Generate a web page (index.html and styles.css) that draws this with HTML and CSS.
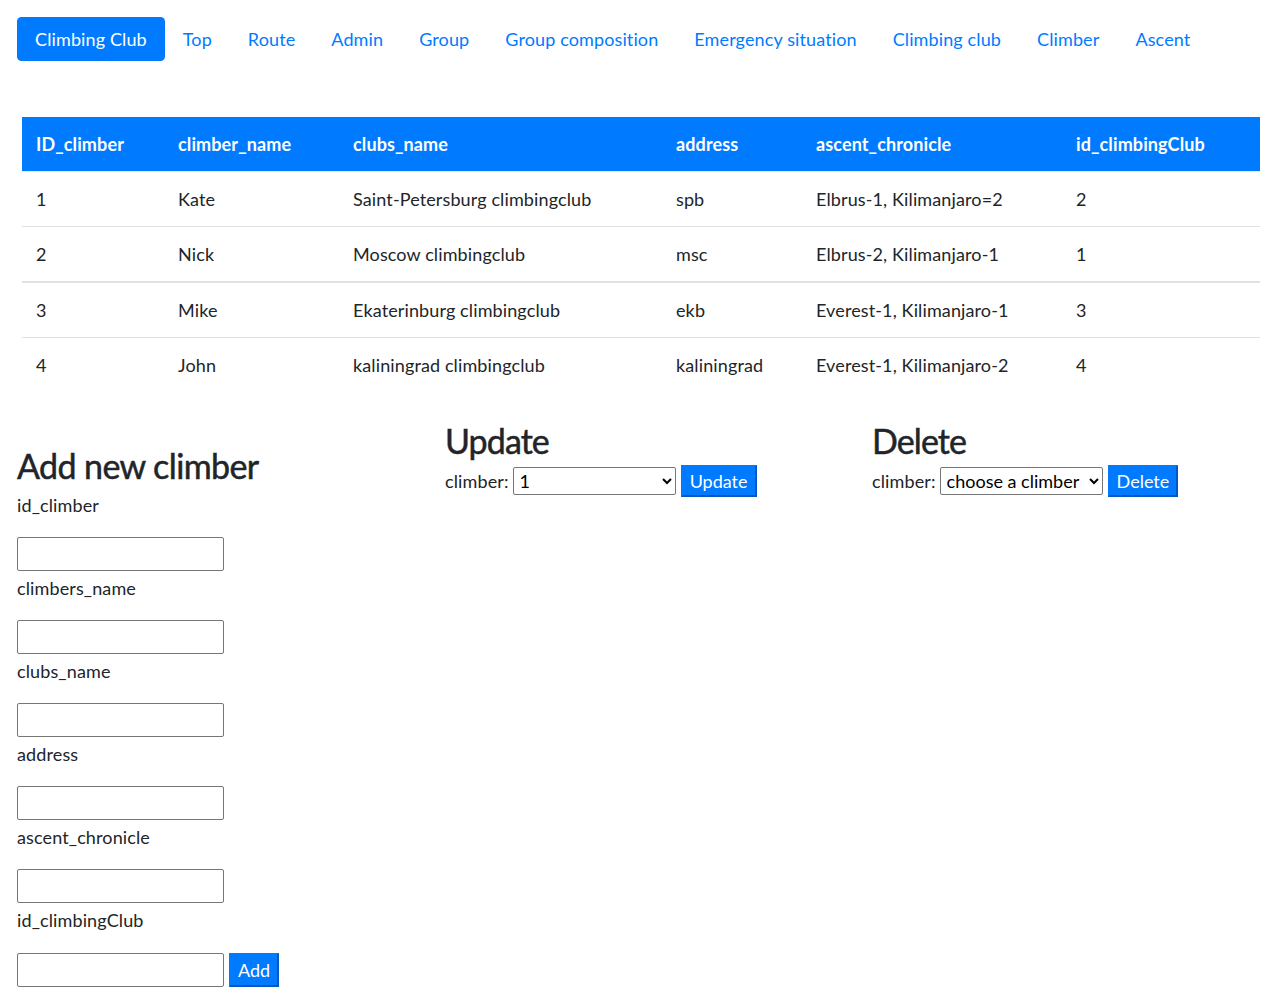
FILE: index.html
```html
<!DOCTYPE html>
<html lang="en">
<head>
<meta charset="utf-8">
<title>Climber</title>
<link rel="stylesheet" href="styles.css">
</head>
<body>
<div class="page">
  <nav class="nav">
    <a class="nav-link active" href="#">Climbing Club</a>
    <a class="nav-link" href="#">Top</a>
    <a class="nav-link" href="#">Route</a>
    <a class="nav-link" href="#">Admin</a>
    <a class="nav-link" href="#">Group</a>
    <a class="nav-link" href="#">Group composition</a>
    <a class="nav-link" href="#">Emergency situation</a>
    <a class="nav-link" href="#">Climbing club</a>
    <a class="nav-link" href="#">Climber</a>
    <a class="nav-link" href="#">Ascent</a>
  </nav>

  <table class="table">
    <colgroup>
      <col class="c1"><col class="c2"><col class="c3"><col class="c4"><col class="c5"><col class="c6">
    </colgroup>
    <thead>
      <tr><th>ID_climber</th><th>climber_name</th><th>clubs_name</th><th>address</th><th>ascent_chronicle</th><th>id_climbingClub</th></tr>
    </thead>
    <tbody>
      <tr><td>1</td><td>Kate</td><td>Saint-Petersburg climbingclub</td><td>spb</td><td>Elbrus-1, Kilimanjaro=2</td><td>2</td></tr>
      <tr><td>2</td><td>Nick</td><td>Moscow climbingclub</td><td>msc</td><td>Elbrus-2, Kilimanjaro-1</td><td>1</td></tr>
      <tr class="thick"><td>3</td><td>Mike</td><td>Ekaterinburg climbingclub</td><td>ekb</td><td>Everest-1, Kilimanjaro-1</td><td>3</td></tr>
      <tr><td>4</td><td>John</td><td>kaliningrad climbingclub</td><td>kaliningrad</td><td>Everest-1, Kilimanjaro-2</td><td>4</td></tr>
    </tbody>
  </table>

  <div class="forms">
    <form class="add-form">
      <h2 class="title title-add">Add new climber</h2>
      <label class="field-label">id_climber</label>
      <input class="field-input" type="text">
      <label class="field-label">climbers_name</label>
      <input class="field-input" type="text">
      <label class="field-label">clubs_name</label>
      <input class="field-input" type="text">
      <label class="field-label">address</label>
      <input class="field-input" type="text">
      <label class="field-label">ascent_chronicle</label>
      <input class="field-input" type="text">
      <label class="field-label">id_climbingClub</label>
      <div class="add-row">
        <input class="field-input last" type="text">
        <button class="btn btn-add" type="button">Add</button>
      </div>
    </form>

    <form class="side-form">
      <h2 class="title">Update</h2>
      <div class="pick-row">
        <span class="pick-label">climber:</span>
        <select class="pick">
          <option>1</option>
          <option>2</option>
          <option>3</option>
          <option>4</option>
          <option>choose a climber</option>
        </select>
        <button class="btn btn-update" type="button">Update</button>
      </div>
    </form>

    <form class="side-form">
      <h2 class="title">Delete</h2>
      <div class="pick-row">
        <span class="pick-label">climber:</span>
        <select class="pick">
          <option>choose a climber</option>
          <option>1</option>
          <option>2</option>
          <option>3</option>
          <option>4</option>
        </select>
        <button class="btn btn-delete" type="button">Delete</button>
      </div>
    </form>
  </div>
</div>
</body>
</html>
```

FILE: styles.css
```css
* { box-sizing: border-box; }

body {
  margin: 0;
  font-family: "Lato", "Noto Sans", "Liberation Sans", sans-serif;
  font-size: 18px;
  line-height: 27px;
  letter-spacing: 0.12px;
  color: #212529;
  background: #fff;
}

.page {
  padding: 17px;
}

/* nav */
.nav {
  display: flex;
  align-items: center;
  height: 44px;
}

.nav-link {
  display: block;
  height: 44px;
  line-height: 44px;
  padding: 0 18px;
  color: #007bff;
  text-decoration: none;
  border-radius: 4.5px;
  white-space: nowrap;
}

.nav-link.active {
  background: #007bff;
  color: #fff;
}

/* table */
.table {
  margin: 56px 0 0 5px;
  width: 1238px;
  border-collapse: separate;
  border-spacing: 0;
  table-layout: fixed;
}

.c1 { width: 142px; }
.c2 { width: 175px; }
.c3 { width: 323px; }
.c4 { width: 140px; }
.c5 { width: 260px; }
.c6 { width: 198px; }

.table th {
  background: #007bff;
  color: #fff;
  font-weight: 700;
  text-align: left;
  height: 55px;
  padding: 0 14px;
  border-bottom: 1px solid #e3e8ee;
}

.table td {
  height: 55px;
  padding: 0 14px;
  border-top: 1px solid #dee2e6;
}

.table tbody tr:first-child td {
  border-top: 0;
  height: 54px;
}

.table tr.thick td {
  border-top-width: 2px;
  height: 56px;
  padding-top: 1px;
}

/* forms */
.forms {
  display: grid;
  grid-template-columns: 428px 427px 1fr;
  margin-top: 27px;
}

.title {
  margin: 0;
  font-size: 34px;
  line-height: 43px;
  font-weight: 400;
  letter-spacing: -0.9px;
  -webkit-text-stroke: 0.5px #212529;
}

.title-add {
  margin-top: 25px;
  letter-spacing: -0.6px;
}

.add-form {
  display: flex;
  flex-direction: column;
  align-items: flex-start;
}

.field-label {
  display: block;
  height: 27px;
  line-height: 27px;
}

.title-add + .field-label {
  margin-top: 5px;
}

.field-input {
  width: 207px;
  height: 34px;
  margin: 18px 0 4px;
  border: 1px solid #767676;
  border-radius: 2px;
  font: inherit;
  padding: 0 4px;
}

.add-row {
  display: flex;
  align-items: center;
  margin-top: 19px;
}

.add-row .field-input {
  margin: 0;
}

.pick-row {
  display: flex;
  align-items: center;
  height: 32px;
  margin-top: 3px;
}

.pick-label {
  margin-right: 4px;
}

.pick {
  width: 163px;
  height: 28px;
  font: inherit;
  font-size: 18px;
  color: #000;
  border: 1px solid #767676;
  border-radius: 2px;
  background: #fff;
  padding: 0 2px;
}

.btn {
  height: 32px;
  margin-left: 5px;
  padding: 0 7px;
  font: inherit;
  font-size: 18px;
  line-height: 26px;
  color: #fff;
  background: #007bff;
  border: 2px solid;
  border-color: #007bff #0058c4 #0058c4 #007bff;
}

.btn-add { height: 34px; width: 50px; }
.btn-update { width: 76px; }
.btn-delete { width: 70px; }
```
